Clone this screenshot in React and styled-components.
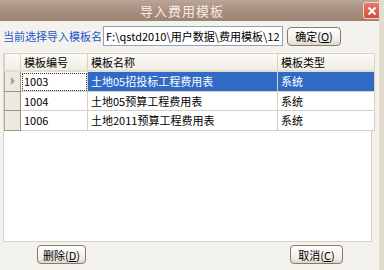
import React, { useState } from 'react';
import styled, { createGlobalStyle } from 'styled-components';

const GlobalStyle = createGlobalStyle`
  html, body {
    margin: 0;
    padding: 0;
    background: #f4f2ec;
  }
  body {
    font-family: "Noto Sans CJK SC", "DejaVu Sans", sans-serif;
    font-size: 11px;
  }
`;

const rows = [
  { code: '1003', name: '土地05招投标工程费用表', type: '系统' },
  { code: '1004', name: '土地05预算工程费用表', type: '系统' },
  { code: '1006', name: '土地2011预算工程费用表', type: '系统' },
];

const Window = styled.div`
  width: 384px;
  height: 270px;
  display: flex;
  flex-direction: column;
  background: #f4f2ec;
  box-sizing: border-box;
  border-right: 5px solid #e2dccf;
  overflow: hidden;
`;

const TitleBar = styled.div`
  height: 21px;
  flex: none;
  display: flex;
  align-items: center;
  justify-content: center;
  position: relative;
  background: linear-gradient(#bba596, #a68c7c 60%, #9d8372);
  margin-right: -5px;
`;

const Title = styled.span`
  color: #f6ece6;
  font-size: 13px;
  letter-spacing: 1px;
  padding-right: 20px;
`;

const Close = styled.div`
  position: absolute;
  right: 3px;
  top: 2px;
  width: 16px;
  height: 15px;
  border: 1px solid #f3d8d0;
  border-radius: 3px;
  background: linear-gradient(#e47b68, #d24f3a);
  display: flex;
  align-items: center;
  justify-content: center;
`;

const PathRow = styled.div`
  display: flex;
  align-items: center;
  height: 20px;
  margin: 5px 0 0 3px;
`;

const Label = styled.span`
  color: #1f56c8;
  font-size: 11px;
  width: 100px;
  white-space: nowrap;
`;

const PathInput = styled.div`
  width: 176px;
  height: 18px;
  border: 1px solid #8fa3b8;
  background: #fff;
  font-size: 11px;
  line-height: 18px;
  padding-left: 2px;
  white-space: nowrap;
  overflow: hidden;
  color: #000;
`;

const Button = styled.div`
  width: ${(p) => p.width}px;
  height: 17px;
  border: 1px solid #8a7a6a;
  border-radius: 4px;
  background: linear-gradient(#ffffff, #f1efe8 70%, #dcd7cb);
  display: flex;
  align-items: center;
  justify-content: center;
  font-size: 11px;
  color: #000;
  box-sizing: content-box;
  u {
    text-decoration: underline;
  }
`;

const OkButton = styled(Button)`
  margin-left: 4px;
`;

const Grid = styled.div`
  margin: 7px 7px 0 3px;
  height: 188px;
  background: #fff;
  border: 1px solid #d8d2c4;
  border-top: none;
  display: flex;
  flex-direction: column;
`;

const Row = styled.div`
  display: grid;
  grid-template-columns: 17px 67px 190px 97px;
  height: ${(p) => (p.header ? 19 : 19.5)}px;
`;

const Cell = styled.div`
  display: flex;
  align-items: center;
  padding-left: 3px;
  border-right: 1px solid #d5d0c4;
  border-bottom: 1px solid #d5d0c4;
  background: ${(p) => (p.selected ? '#316ac5' : '#fff')};
  color: ${(p) => (p.selected ? '#fff' : '#000')};
  font-size: 11px;
  white-space: nowrap;
  overflow: hidden;
  box-sizing: border-box;
`;

const CodeCell = styled(Cell)`
  outline: ${(p) => (p.focused ? '1px dotted #333' : 'none')};
  outline-offset: -2px;
`;

const HeadCell = styled.div`
  display: flex;
  align-items: center;
  padding-left: 3px;
  background: linear-gradient(#fbfaf6, #f0ede4);
  border-right: 1px solid #d7d2c6;
  border-bottom: 2px solid #e2ddd0;
  border-top: 1px solid #d8d2c4;
  font-size: 11px;
  box-sizing: border-box;
`;

const Selector = styled.div`
  background: #ece9de;
  border: 1px solid #9c9482;
  border-top: none;
  border-left-color: #b8b0a0;
  display: flex;
  align-items: center;
  justify-content: center;
  box-sizing: border-box;
`;

const HeadSelector = styled(HeadCell)`
  border-left: 1px solid #d8d2c4;
`;

const Arrow = styled.span`
  width: 0;
  height: 0;
  border-top: 4px solid transparent;
  border-bottom: 4px solid transparent;
  border-left: 4px solid #a7a293;
`;

const Footer = styled.div`
  display: flex;
  justify-content: space-between;
  padding: 3px 36px 0 37px;
`;

export default function App() {
  const [selected] = useState(0);
  return (
    <Window>
      <GlobalStyle />
      <TitleBar>
        <Title>导入费用模板</Title>
        <Close>
          <svg width="10" height="10" viewBox="0 0 10 10">
            <path d="M1.5 1.5 L8.5 8.5 M8.5 1.5 L1.5 8.5" stroke="#fff" strokeWidth="2" />
          </svg>
        </Close>
      </TitleBar>
      <PathRow>
        <Label>当前选择导入模板名</Label>
        <PathInput>F:\qstd2010\用户数据\费用模板\12</PathInput>
        <OkButton width={52}>
          确定(<u>O</u>)
        </OkButton>
      </PathRow>
      <Grid>
        <Row header>
          <HeadSelector />
          <HeadCell>模板编号</HeadCell>
          <HeadCell>模板名称</HeadCell>
          <HeadCell>模板类型</HeadCell>
        </Row>
        {rows.map((r, i) => (
          <Row key={r.code}>
            <Selector>{i === selected && <Arrow />}</Selector>
            <CodeCell focused={i === selected}>{r.code}</CodeCell>
            <Cell selected={i === selected}>{r.name}</Cell>
            <Cell selected={i === selected}>{r.type}</Cell>
          </Row>
        ))}
      </Grid>
      <Footer>
        <Button width={47}>
          删除(<u>D</u>)
        </Button>
        <Button width={51}>
          取消(<u>C</u>)
        </Button>
      </Footer>
    </Window>
  );
}
